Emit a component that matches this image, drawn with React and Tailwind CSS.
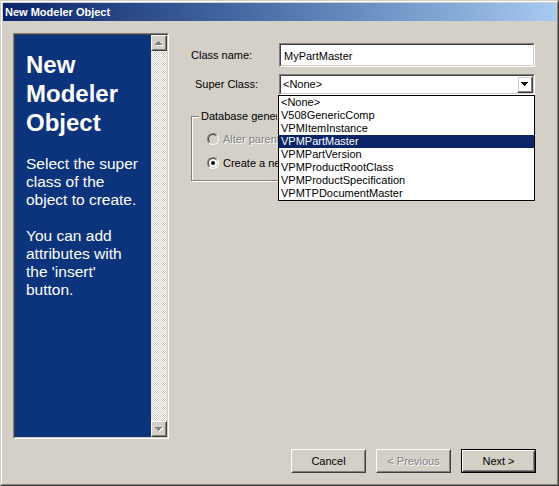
import React from "react";

const Raised = ({ className = "", children }) => (
  <div className={`border border-t-white border-l-white border-r-[#404040] border-b-[#404040] ${className}`}>
    <div className="w-full h-full border border-t-[#d4d0c8] border-l-[#d4d0c8] border-r-[#808080] border-b-[#808080] flex items-center justify-center">
      {children}
    </div>
  </div>
);

const Sunken = ({ className = "", inner = "", children }) => (
  <div className={`border border-t-[#808080] border-l-[#808080] border-r-white border-b-white ${className}`}>
    <div className={`w-full h-full border border-t-[#404040] border-l-[#404040] border-r-[#d4d0c8] border-b-[#d4d0c8] ${inner}`}>
      {children}
    </div>
  </div>
);

const Arrow = ({ up = false, disabled = false }) => (
  <svg width="8" height="5" viewBox="0 0 8 5" shapeRendering="crispEdges">
    {disabled && (
      <path
        transform="translate(1 1)"
        fill="#ffffff"
        d={up ? "M3 0h1v1H3z M2 1h3v1H2z M1 2h5v1H1z M0 3h7v1H0z" : "M0 0h7v1H0z M1 1h5v1H1z M2 2h3v1H2z M3 3h1v1H3z"}
      />
    )}
    <path
      fill={disabled ? "#808080" : "#000000"}
      d={up ? "M3 0h1v1H3z M2 1h3v1H2z M1 2h5v1H1z M0 3h7v1H0z" : "M0 0h7v1H0z M1 1h5v1H1z M2 2h3v1H2z M3 3h1v1H3z"}
    />
  </svg>
);

const Radio = ({ checked = false, disabled = false }) => (
  <div className="w-[12px] h-[12px] rounded-full border border-t-[#808080] border-l-[#808080] border-r-white border-b-white shrink-0">
    <div
      className={`w-full h-full rounded-full border border-t-[#404040] border-l-[#404040] border-r-[#d4d0c8] border-b-[#d4d0c8] flex items-center justify-center ${
        disabled ? "bg-[#d4d0c8]" : "bg-white"
      }`}
    >
      {checked && <div className="w-[4px] h-[4px] rounded-full bg-black"></div>}
    </div>
  </div>
);

const classes = [
  "<None>",
  "V508GenericComp",
  "VPMItemInstance",
  "VPMPartMaster",
  "VPMPartVersion",
  "VPMProductRootClass",
  "VPMProductSpecification",
  "VPMTPDocumentMaster",
];

const App = () => {
  return (
    <div className="w-[559px] h-[486px] border border-t-[#d4d0c8] border-l-[#d4d0c8] border-r-[#404040] border-b-[#404040] font-['Liberation_Sans',Arial,sans-serif] text-[11px] text-black">
      <div className="h-full border border-t-white border-l-white border-r-[#808080] border-b-[#808080] bg-[#d4d0c8] p-px flex flex-col">
        {/* Title bar */}
        <div className="h-[18px] bg-linear-to-r from-[#0a246a] to-[#a6caf0] flex items-center pl-[2px] font-bold text-white">
          New Modeler Object
        </div>

        <div className="flex-1 flex flex-col pt-[12px] pl-[10px] pr-[20px] pb-[10px]">
          <div className="flex h-[406px]">
            {/* Left info panel */}
            <Sunken className="w-[156px] h-full" inner="flex">
              <div className="flex-1 bg-[#0c347d] text-white pl-[11px] pt-[15px]">
                <div className="font-bold text-[24px] leading-[29px]">
                  New
                  <br />
                  Modeler
                  <br />
                  Object
                </div>
                <div className="mt-[18px] text-[15.5px] leading-[18px] whitespace-nowrap">
                  Select the super
                  <br />
                  class of the
                  <br />
                  object to create.
                  <br />
                  <br />
                  You can add
                  <br />
                  attributes with
                  <br />
                  the 'insert'
                  <br />
                  button.
                </div>
              </div>
              <div className="w-[16px] flex flex-col">
                <Raised className="h-[16px]">
                  <Arrow up disabled />
                </Raised>
                <div className="flex-1 bg-[repeating-conic-gradient(#ffffff_0%_25%,#d4d0c8_0%_50%)] bg-[length:2px_2px]"></div>
                <Raised className="h-[16px]">
                  <Arrow disabled />
                </Raised>
              </div>
            </Sunken>

            {/* Form */}
            <div className="ml-[22px] flex-1 flex flex-col">
              <div className="mt-[10px] flex items-center">
                <div className="w-[88px]">Class name:</div>
                <Sunken className="w-[256px] h-[24px]" inner="bg-white pl-[3px] pt-[3px]">
                  MyPartMaster
                </Sunken>
              </div>

              <div className="mt-[7px] flex items-center">
                <div className="w-[88px] pl-[4px]">Super Class:</div>
                <div className="relative">
                  <Sunken className="w-[256px] h-[21px]" inner="bg-white flex items-center pl-[2px]">
                    <span>&lt;None&gt;</span>
                    <Raised className="ml-auto w-[16px] h-[17px]">
                      <Arrow />
                    </Raised>
                  </Sunken>

                  {/* Open dropdown list */}
                  <div className="absolute top-[21px] left-[-1px] w-[257px] border border-black bg-white z-10">
                    {classes.map((c) => (
                      <div
                        key={c}
                        className={`h-[13px] leading-[13px] px-[2px] ${
                          c === "VPMPartMaster" ? "bg-[#0a246a] text-white" : ""
                        }`}
                      >
                        {c}
                      </div>
                    ))}
                  </div>
                </div>
              </div>

              {/* Group box, partly hidden behind the open list */}
              <div className="mt-[21px] relative w-[340px] h-[65px] border border-[#808080] shadow-[inset_1px_1px_0_#fff,1px_1px_0_#fff] pl-[15px] pt-[14px]">
                <div className="absolute top-[-7px] left-[7px] bg-[#d4d0c8] pl-[2px] leading-[13px] w-[78px] overflow-hidden whitespace-nowrap">
                  Database generation
                </div>
                <div className="h-[16px] flex items-center gap-[4px] text-[#808080] [text-shadow:1px_1px_0_#fff]">
                  <Radio disabled />
                  <span className="w-[55px] overflow-hidden whitespace-nowrap">Alter parent class</span>
                </div>
                <div className="mt-[8px] h-[16px] flex items-center gap-[4px]">
                  <Radio checked />
                  <span className="w-[55px] overflow-hidden whitespace-nowrap">Create a new class</span>
                </div>
              </div>
            </div>
          </div>

          {/* Buttons */}
          <div className="mt-[10px] flex justify-end gap-[10px]">
            <Raised className="w-[75px] h-[24px]">Cancel</Raised>
            <Raised className="w-[75px] h-[24px]">
              <span className="text-[#808080] [text-shadow:1px_1px_0_#fff]">&lt; Previous</span>
            </Raised>
            <div className="w-[75px] h-[24px] border border-black">
              <Raised className="w-full h-full">Next &gt;</Raised>
            </div>
          </div>
        </div>
      </div>
    </div>
  );
};

export default App;
